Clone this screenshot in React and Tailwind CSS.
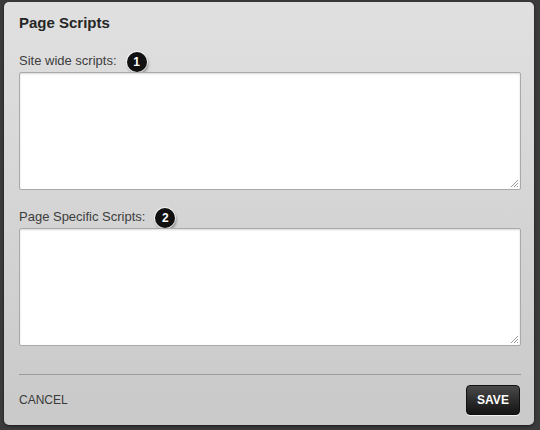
const Badge = ({ n }) => (
  <span className="ml-[10px] mt-[3px] flex h-[20px] w-[20px] items-center justify-center rounded-full bg-[#111] text-[12px] font-bold leading-none text-white shadow-[1px_2px_3px_rgba(0,0,0,0.5)] ring-1 ring-white/70">
    {n}
  </span>
);

const Field = ({ label, n }) => (
  <div className="flex flex-col">
    <div className="flex h-[20px] items-center">
      <span className="text-[13px] text-[#3d3d3d]">{label}</span>
      <Badge n={n} />
    </div>
    <div className="relative mt-[1px] h-[118px] rounded-[2px] border border-[#a9a9a9] bg-white shadow-[inset_0_1px_2px_rgba(0,0,0,0.15)]">
      {/* resize grip */}
      <svg className="absolute bottom-[1px] right-[1px]" width="10" height="10" viewBox="0 0 10 10">
        <path d="M9 2 L2 9 M9 5 L5 9 M9 8 L8 9" stroke="#999" strokeWidth="1" fill="none" />
      </svg>
    </div>
  </div>
);

export default function App() {
  return (
    <div className="h-[430px] w-[540px] bg-[#3b3b3b] pl-[4px] pr-[6px] pt-[2px] pb-[5px] font-['Liberation_Sans',Arial,sans-serif]">
      <div className="flex h-full flex-col rounded-[5px] bg-gradient-to-b from-[#e0e0e0] to-[#c9c9c9] pl-[15px] pr-[13px] pb-[10px] shadow-[0_1px_3px_rgba(0,0,0,0.6)]">
        <h1 className="pt-[10px] text-[15px] font-bold text-[#262626]">Page Scripts</h1>

        <div className="mt-[16px] flex flex-col gap-[17px]">
          <Field label="Site wide scripts:" n="1" />
          <Field label="Page Specific Scripts:" n="2" />
        </div>

        <div className="mt-[28px] border-t border-[#9a9a9a]" />

        <div className="mt-[10px] flex items-center justify-between">
          <span className="text-[12px] text-[#3a3a3a]">CANCEL</span>
          <button className="mr-[1px] h-[30px] w-[54px] rounded-[4px] border border-[#111] bg-gradient-to-b from-[#4a4a4a] to-[#141414] text-[12px] font-bold text-white shadow-[0_1px_0_rgba(255,255,255,0.7)]">
            SAVE
          </button>
        </div>
      </div>
    </div>
  );
}
